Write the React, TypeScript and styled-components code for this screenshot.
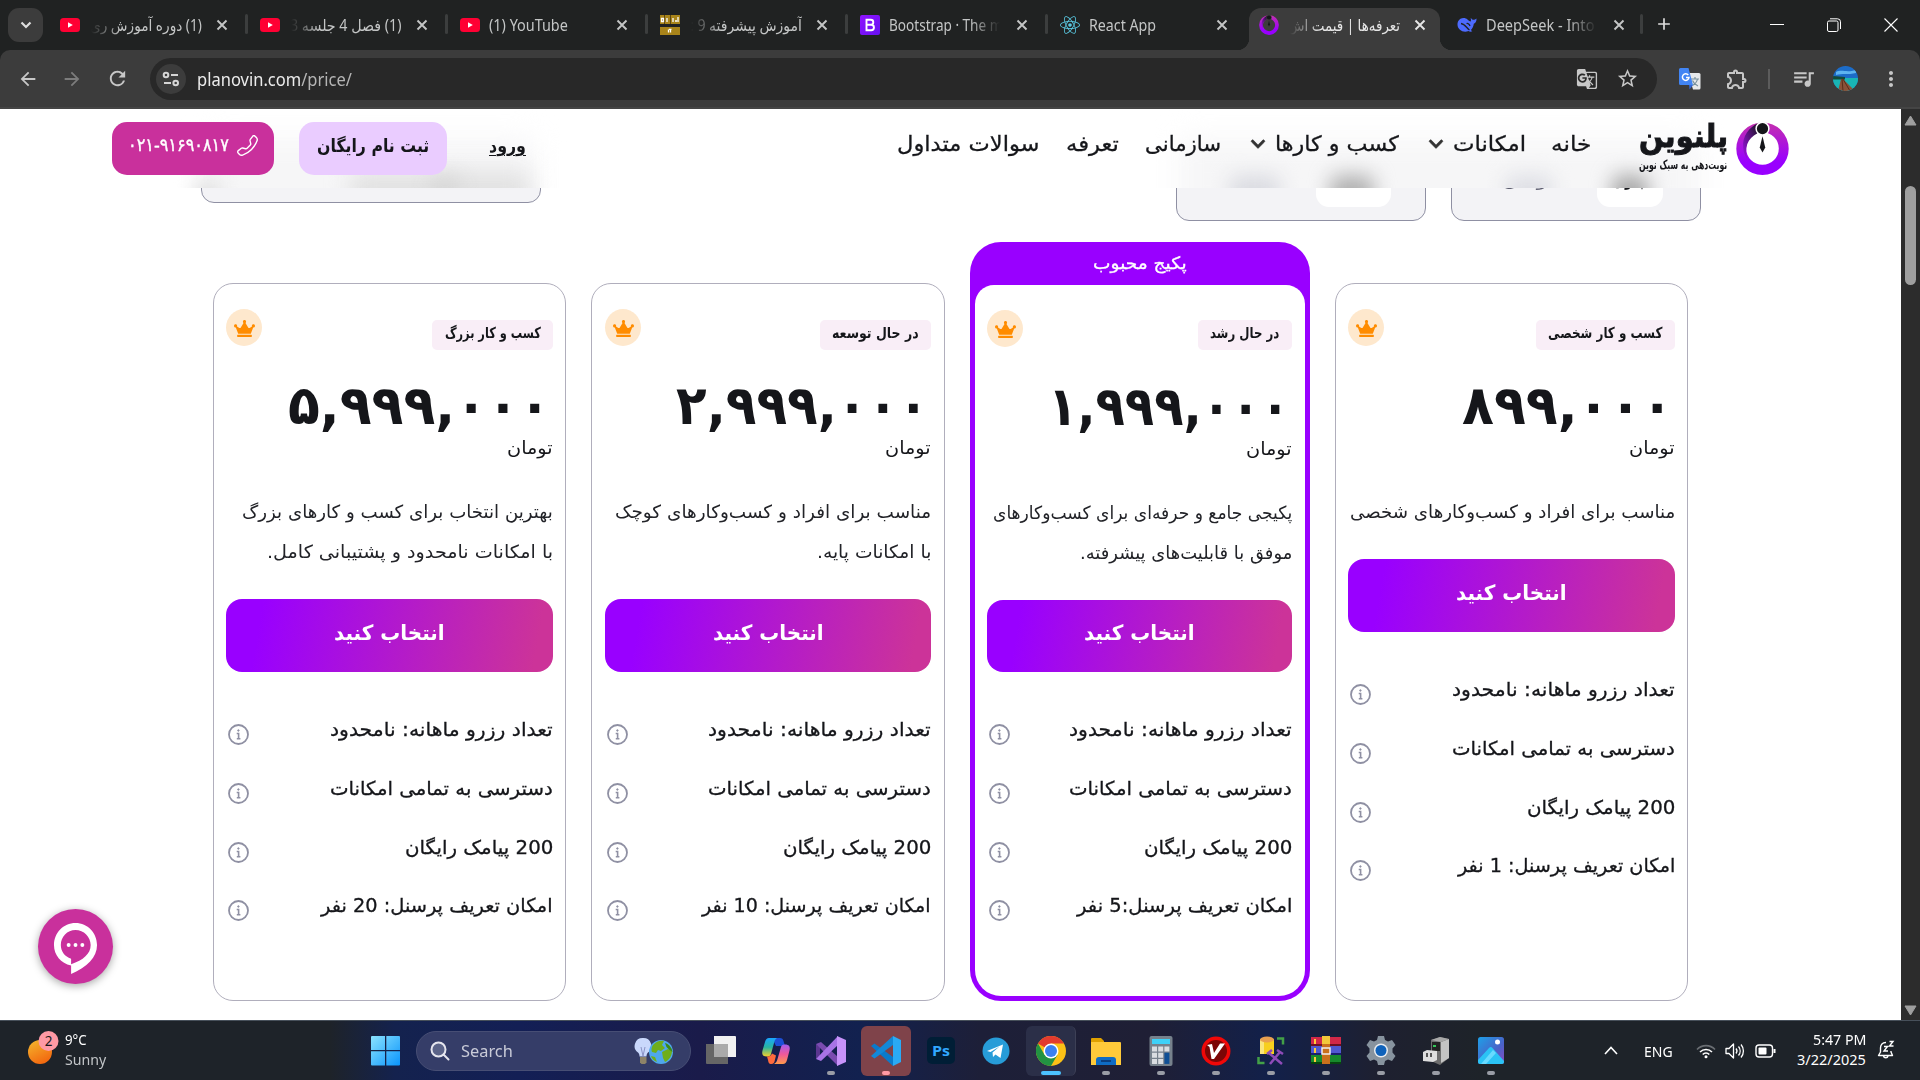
import React, { useLayoutEffect, useRef, useState } from "react";
import styled, { createGlobalStyle, css } from "styled-components";
import { FaCrown, FaChevronDown, FaReact } from "react-icons/fa";
import {
  MdArrowBack,
  MdArrowForward,
  MdRefresh,
  MdStarBorder,
  MdOutlineExtension,
  MdQueueMusic,
  MdMoreVert,
  MdGTranslate,
  MdAdd,
} from "react-icons/md";
import { BsTelephone } from "react-icons/bs";

const uiFont = `"Noto Sans", "Open Sans", "DejaVu Sans", sans-serif`;
const faFont = `"DejaVu Sans", "Noto Sans", sans-serif`;

const Global = createGlobalStyle`
  * { box-sizing: border-box; }
  body { margin: 0; background: #fff; overflow: hidden; }
  svg { display: block; flex: none; }
`;

/* ---------- width-fitted text ---------- */

const FitBox = styled.span<{ $rtl: boolean }>`
  display: inline-block;
  flex: none;
  white-space: nowrap;
  direction: ${(p) => (p.$rtl ? "rtl" : "ltr")};
  text-align: start;
`;
const FitInner = styled.span<{ $rtl: boolean }>`
  display: inline-block;
  transform-origin: ${(p) => (p.$rtl ? "right" : "left")} center;
`;

function Fit({ w, rtl = true, children }: { w: number; rtl?: boolean; children: React.ReactNode }) {
  const ref = useRef<HTMLSpanElement>(null);
  const [scale, setScale] = useState(1);
  useLayoutEffect(() => {
    if (ref.current) setScale(w / ref.current.offsetWidth);
  }, [w, children]);
  return (
    <FitBox $rtl={rtl} style={{ width: w }}>
      <FitInner $rtl={rtl} ref={ref} style={{ transform: `scaleX(${scale})` }}>
        {children}
      </FitInner>
    </FitBox>
  );
}

/* ---------- browser chrome ---------- */

const Screen = styled.div`
  width: 1920px;
  height: 1080px;
  display: flex;
  flex-direction: column;
  overflow: hidden;
  font-family: ${uiFont};
`;
const TabStrip = styled.div`
  height: 50px;
  flex: none;
  background: #202222;
  display: flex;
  align-items: flex-end;
  padding-left: 8px;
`;
const TabSearch = styled.div`
  width: 35px;
  height: 34px;
  margin-bottom: 8px;
  margin-right: 7px;
  border-radius: 11px;
  background: #3c3c3c;
  display: flex;
  align-items: center;
  justify-content: center;
  color: #dedede;
`;
const Tab = styled.div<{ $active?: boolean; $w?: number; $line?: boolean; $pad?: number }>`
  position: relative;
  width: ${(p) => p.$w ?? 200}px;
  height: 42px;
  flex: none;
  display: flex;
  align-items: center;
  padding: 0 0 8px ${(p) => p.$pad ?? 10}px;
  color: ${(p) => (p.$active ? "#e6e6e6" : "#c4c6c6")};
  font-size: 15.5px;
  ${(p) =>
    p.$active &&
    css`
      background: #3c3c3c;
      border-radius: 12px 12px 0 0;
      &::before,
      &::after {
        content: "";
        position: absolute;
        bottom: 0;
        width: 12px;
        height: 12px;
      }
      &::before {
        left: -12px;
        background: radial-gradient(circle at 0 0, transparent 12px, #3c3c3c 12.5px);
      }
      &::after {
        right: -12px;
        background: radial-gradient(circle at 100% 0, transparent 12px, #3c3c3c 12.5px);
      }
    `}
  ${(p) =>
    p.$line &&
    css`
      &::after {
        content: "";
        position: absolute;
        right: 2px;
        top: 6px;
        width: 3px;
        height: 20px;
        border-radius: 2px;
        background: #3c3e3e;
      }
    `}
`;
const TabTitle = styled.div<{ $rtl?: boolean; $fade?: boolean; $w?: number }>`
  width: ${(p) => p.$w ?? 113}px;
  height: 26px;
  line-height: 26px;
  margin-left: 9px;
  margin-right: 12px;
  overflow: hidden;
  display: flex;
  direction: ${(p) => (p.$rtl ? "rtl" : "ltr")};
  ${(p) =>
    p.$fade &&
    css`
      mask-image: linear-gradient(to ${p.$rtl ? "right" : "left"}, transparent 2px, #000 32px);
    `}
`;
const NewTab = styled.div`
  width: 36px;
  height: 42px;
  padding: 6px 0 0 9px;
  color: #dedede;
`;
const WindowButtons = styled.div`
  margin-left: auto;
  height: 50px;
  display: flex;
  align-items: center;
  padding-right: 22px;
  gap: 43px;
`;
const Toolbar = styled.div`
  height: 59px;
  flex: none;
  background: #3c3c3c;
  border-bottom: 2px solid #454545;
  border-radius: 10px 10px 0 0;
  display: flex;
  align-items: center;
  padding-left: 17px;
  color: #c7c7c7;
`;
const ToolbarBack = styled.div`
  background: #202222;
`;
const NavIcon = styled.div<{ $dim?: boolean; $gap: number }>`
  margin-right: ${(p) => p.$gap}px;
  color: ${(p) => (p.$dim ? "#7c7c7c" : "#c7c7c7")};
`;
const Omnibox = styled.div`
  width: 1507px;
  height: 42px;
  border-radius: 21px;
  background: #282828;
  display: flex;
  align-items: center;
  padding: 0 18px 0 6px;
  gap: 18px;
`;
const SiteInfo = styled.div`
  width: 30px;
  height: 30px;
  border-radius: 50%;
  background: #3c3c3c;
  display: flex;
  align-items: center;
  justify-content: center;
  margin-right: -7px;
`;
const Url = styled.div`
  flex: 1;
  font-size: 18px;
  line-height: 26px;
  color: #ececec;
  i {
    font-style: normal;
    color: #b5b5b5;
  }
`;
const ToolRight = styled.div`
  display: flex;
  align-items: center;
  margin-left: 22px;
`;
const ExtensionSlot = styled.div`
  margin-left: 24px;
`;
const AvatarSlot = styled.div`
  margin: 0 21px 0 17px;
`;
const ToolSep = styled.div`
  width: 2px;
  height: 20px;
  background: #5c5c5c;
  margin: 0 21px 0 19px;
`;

/* ---------- page ---------- */

const Viewport = styled.div`
  height: 911px;
  flex: none;
  display: flex;
`;
const Page = styled.main`
  position: relative;
  width: 1901px;
  background: #fff;
  font-family: ${faFont};
  color: #15161a;
  overflow: hidden;
`;
const Scrollbar = styled.div`
  width: 19px;
  background: #2c2c2c;
  display: flex;
  flex-direction: column;
  align-items: center;
  padding: 6px 0 4px;
`;
const Thumb = styled.div`
  width: 11px;
  height: 99px;
  margin: 60px 0 auto;
  border-radius: 6px;
  background: #9f9f9f;
`;
const Header = styled.header`
  position: absolute;
  z-index: 2;
  top: 0;
  left: 0;
  width: 1901px;
  height: 79px;
  overflow: hidden;
  background: #fff;
  display: flex;
  align-items: flex-start;
  padding: 13px 0 0 112px;
  > * {
    position: relative;
  }
`;
const Haze = styled.span<{ $x: number; $y: number; $w: number; $c: string; $b: number }>`
  && {
    position: absolute;
  }
  left: ${(p) => p.$x}px;
  top: ${(p) => p.$y}px;
  width: ${(p) => p.$w}px;
  height: ${(p) => 110 - p.$y}px;
  border-radius: 8px;
  background: ${(p) => p.$c};
  filter: blur(${(p) => p.$b}px);
`;
const PhoneButton = styled.div`
  width: 162px;
  height: 53px;
  border-radius: 15px;
  background: #c9309c;
  color: #fff;
  display: flex;
  align-items: flex-start;
  padding: 11px 0 0 16px;
  gap: 8px;
  font-size: 18px;
  line-height: 24px;
  -webkit-text-stroke: 0.4px currentColor;
  svg {
    transform: scaleX(-1);
    margin-top: 2px;
  }
`;
const SignUp = styled.div`
  width: 148px;
  height: 53px;
  margin-left: 25px;
  border-radius: 15px;
  background: #eaccff;
  display: flex;
  justify-content: center;
  font-size: 18px;
  font-weight: 700;
  line-height: 48px;
`;
const Login = styled.div`
  margin-left: 42px;
  font-size: 18px;
  font-weight: 700;
  line-height: 48px;
  u {
    text-decoration-thickness: 1px;
    text-underline-offset: 3px;
  }
`;
const Nav = styled.nav`
  display: flex;
  align-items: center;
  height: 44px;
  margin-left: 371px;
  font-size: 21px;
  line-height: 44px;
  -webkit-text-stroke: 0.3px currentColor;
`;
const NavItem = styled.div<{ $gap?: number }>`
  display: flex;
  align-items: center;
  gap: 9px;
  margin-right: ${(p) => p.$gap ?? 25}px;
  svg {
    color: #333;
    stroke: #333;
    stroke-width: 20px;
  }
`;
const Brand = styled.div`
  display: flex;
  margin-left: 48px;
  gap: 8px;
`;
const BrandText = styled.div`
  width: 89px;
  display: flex;
  flex-direction: column;
  font-weight: 700;
`;
const BrandName = styled.div`
  height: 34px;
  font-size: 31px;
  line-height: 28px;
  -webkit-text-stroke: 1px currentColor;
`;
const BrandTag = styled.div`
  height: 18px;
  font-size: 12.5px;
  line-height: 18px;
`;

const Panels = styled.div`
  display: flex;
  align-items: flex-start;
  padding: 18px 0 0 201px;
  height: 133px;
`;
const Panel = styled.div<{ $w: number; $h: number; $ml?: number }>`
  width: ${(p) => p.$w}px;
  height: ${(p) => p.$h}px;
  margin-left: ${(p) => p.$ml ?? 0}px;
  border: 1px solid #8f90a3;
  border-radius: 13px;
  background: #f3f3f6;
  display: flex;
  align-items: flex-end;
`;
const Pill = styled.div<{ $w: number; $ml: number }>`
  width: ${(p) => p.$w}px;
  height: 58px;
  margin: 0 0 13px ${(p) => p.$ml}px;
  border-radius: 13px;
  background: #fff;
  display: flex;
  justify-content: center;
  font-weight: 700;
  font-size: 17px;
  line-height: 63px;
`;
const PanelText = styled.div`
  height: 58px;
  margin: 0 0 13px 50px;
  line-height: 63px;
  font-size: 17px;
  color: #5d5e70;
`;

const Cards = styled.section`
  display: flex;
  align-items: flex-end;
  height: 759px;
  padding-left: 213px;
  gap: 25px;
`;
const cardBody = css`
  direction: rtl;
  display: flex;
  flex-direction: column;
  background: #fff;
`;
const Card = styled.article<{ $w: number; $pad: number }>`
  ${cardBody}
  width: ${(p) => p.$w}px;
  height: 718px;
  border: 1px solid #b0aebc;
  border-radius: 20px;
  padding: 25px ${(p) => p.$pad}px 0;
`;
const Popular = styled.article`
  width: 340px;
  height: 759px;
  border-radius: 31px;
  background: #9900ff;
  padding: 0 5px 5px;
  display: flex;
  flex-direction: column;
`;
const PopularLabel = styled.div`
  height: 43px;
  display: flex;
  justify-content: center;
  color: #fff;
  font-size: 17px;
  line-height: 43px;
  -webkit-text-stroke: 0.3px currentColor;
`;
const PopularBody = styled.div`
  ${cardBody}
  flex: 1;
  border-radius: 19px 19px 26px 26px;
  padding: 25px 13px 0 12px;
`;
const TopRow = styled.div<{ $shift: number }>`
  display: flex;
  justify-content: space-between;
  align-items: flex-start;
  height: 41px;
  > :first-child {
    margin-top: ${(p) => p.$shift}px;
  }
`;
const Badge = styled.div<{ $w: number }>`
  width: ${(p) => p.$w}px;
  height: 30px;
  border-radius: 5px;
  background: #f9eef7;
  display: flex;
  justify-content: center;
  font-size: 15px;
  font-weight: 700;
  line-height: 27px;
`;
const Crown = styled.div`
  width: 36px;
  height: 37px;
  border-radius: 50%;
  background: #fee8cd;
  color: #ff8c00;
  display: flex;
  align-items: center;
  justify-content: center;
  padding-top: 1px;
`;
const Price = styled.div`
  height: 60px;
  margin-top: 26px;
  padding-right: 2px;
  font-size: 54px;
  font-weight: 700;
  line-height: 60px;
`;
const Unit = styled.div`
  height: 24px;
  font-size: 18px;
  line-height: 24px;
`;
const Desc = styled.div`
  margin-top: 32px;
  font-size: 18px;
  line-height: 40px;
  display: flex;
  flex-direction: column;
  color: #222328;
`;
const Choose = styled.button<{ $h: number }>`
  flex: none;
  height: ${(p) => p.$h}px;
  margin-top: 27px;
  border: 0;
  border-radius: 16px;
  padding: 0 0 6px;
  background: linear-gradient(100deg, #9900ff 11%, #cc3399 94%);
  color: #fff;
  font-family: ${faFont};
  font-size: 21px;
  font-weight: 700;
`;
const Features = styled.ul`
  list-style: none;
  margin: 29px 0 0;
  padding: 0;
  font-size: 19px;
  -webkit-text-stroke: 0.3px currentColor;
`;
const Feature = styled.li`
  display: flex;
  justify-content: space-between;
  height: 58.75px;
  line-height: 57px;
  svg {
    margin: 23px 0 0 2px;
  }
`;
const Chat = styled.div`
  position: absolute;
  left: 38px;
  top: 800px;
  width: 75px;
  height: 75px;
  border-radius: 50%;
  background: #c9309c;
  box-shadow: 0 2px 8px rgba(0, 0, 0, 0.35);
  display: flex;
  align-items: center;
  justify-content: center;
  padding-top: 3px;
`;

/* ---------- taskbar ---------- */

const Taskbar = styled.footer`
  height: 60px;
  flex: none;
  display: flex;
  align-items: center;
  border-top: 1px solid #47505a;
  background: linear-gradient(
    90deg,
    #1e2329 0,
    #1e2329 330px,
    #14224e 395px,
    #131f55 520px,
    #1a1b4a 700px,
    #12214f 860px,
    #1d1f38 980px,
    #1f1f35 1150px,
    #12204a 1270px,
    #1e2030 1380px,
    #1e2329 1480px
  );
  color: #fff;
`;
const Weather = styled.div`
  width: 371px;
  padding: 0 0 4px 26px;
  display: flex;
  align-items: center;
  gap: 6px;
  font-size: 14.5px;
  line-height: 20px;
`;
const WeatherText = styled.div`
  display: flex;
  flex-direction: column;
  > :last-child {
    color: #c2c5c8;
  }
`;
const SearchBox = styled.div`
  width: 275px;
  height: 40px;
  margin-left: 15px;
  border-radius: 20px;
  background: #353d68;
  border: 1px solid #474e74;
  display: flex;
  align-items: center;
  padding: 0 16px 0 13px;
  font-size: 17px;
  color: #c9cbd8;
  > svg:last-child {
    margin-left: auto;
  }
`;
const SearchLabel = styled.div`
  margin-left: 11px;
`;
const Apps = styled.div`
  display: flex;
  margin-left: 3px;
`;
const AppSlot = styled.div`
  width: 55px;
  height: 50px;
  padding: 0 2px;
`;
const AppButton = styled.div<{ $bg?: string; $run?: string; $wide?: boolean }>`
  width: 50px;
  height: 50px;
  border-radius: 6px;
  background: ${(p) => p.$bg ?? "transparent"};
  display: flex;
  flex-direction: column;
  align-items: center;
  padding-top: 10px;
  ${(p) =>
    p.$wide &&
    css`
      border-right: 1px solid #3d4056;
    `}
  &::after {
    content: "";
    margin-top: 5px;
    width: ${(p) => (p.$wide ? 20 : 8)}px;
    height: 4px;
    border-radius: 2px;
    background: ${(p) => p.$run ?? "transparent"};
  }
`;
const Tray = styled.div`
  margin-left: auto;
  display: flex;
  align-items: center;
  font-size: 14.5px;
`;
const TrayGroup = styled.div`
  display: flex;
  align-items: center;
  gap: 9px;
  margin: 0 21px 0 23px;
`;
const Lang = styled.div`
  margin-left: 26px;
`;
const Clock = styled.div`
  width: 69px;
  display: flex;
  flex-direction: column;
  align-items: flex-end;
  line-height: 20px;
  padding-bottom: 4px;
`;
const Bell = styled.div`
  margin: 0 25px 2px 11px;
`;

/* ---------- drawings ---------- */

const CloseMark = () => (
  <svg width="16" height="16" viewBox="0 0 16 16" fill="none" stroke="currentColor" strokeWidth="1.900">
    <path d="M3.500 3.500l9 9M12.500 3.500l-9 9" />
  </svg>
);
const YouTube = () => (
  <svg width="20" height="20" viewBox="0 0 20 20">
    <rect y="3" width="20" height="14" rx="3.5" fill="#ff0033" />
    <path d="M8 7.2v5.6l4.8-2.8z" fill="#fff" />
  </svg>
);
const BookIcon = () => (
  <svg width="20" height="20" viewBox="0 0 20 20">
    <path fill="#a8841a" d="M0 0h20v9H0zM0 12h20v8H0z" />
    <path fill="#5c4510" d="M4 0h1v9H4zM10 0h1v9h-1z" />
    <path stroke="#fff" strokeWidth="1.300" d="M1.500 3.500h2v3h-2zM7 3v4M13 3v4M15 6h2M18 2v5M8.500 14.500v3M10.500 14.500v3M9 14.300h2.500" fill="none" />
  </svg>
);
const BootstrapIcon = () => (
  <svg width="20" height="20" viewBox="0 0 20 20">
    <defs>
      <linearGradient id="bs" x1="0" y1="0" x2="1" y2="1">
        <stop stopColor="#9013fe" />
        <stop offset="1" stopColor="#6610f2" />
      </linearGradient>
    </defs>
    <rect width="20" height="20" rx="2" fill="url(#bs)" />
    <path d="M6.500 4.700h4.300a2.500 2.500 0 0 1 0 5H6.500zM6.500 9.700h4.700a2.700 2.700 0 0 1 0 5.500H6.500z" fill="none" stroke="#fff" strokeWidth="1.900" />
  </svg>
);
const RingMark = ({ size, dark }: { size: number; dark?: boolean }) => (
  <svg width={size} height={size} viewBox="0 0 52 52">
    <defs>
      <linearGradient id={`rg${size}`} x1="0" y1="0" x2="0" y2="1">
        <stop stopColor="#c42fae" />
        <stop offset=".75" stopColor="#9900ff" />
      </linearGradient>
      <linearGradient id={`rd${size}`} x1="1" y1="0" x2="0" y2="1">
        <stop stopColor="#15161a" />
        <stop offset="1" stopColor="#a010e8" />
      </linearGradient>
    </defs>
    <path fill={`url(#rg${size})`} fillRule="evenodd" d="M26 .5a25.700 25.700 0 1 0 0 51.400 25.700 25.700 0 0 0 0-51.400zM26 10a16 16 0 1 1 0 32 16 16 0 0 1 0-32z" />
    <path fill={`url(#rd${size})`} d="M22 1C13 5 6 14 7 25c.3 5 1.700 8 4 11-3-10 0-20 10-25z" />
    <circle cx="26" cy="6.500" r="7" fill={dark ? "#3c3c3c" : "#fff"} />
    <circle cx="26" cy="6.500" r="5.500" fill="#15161a" />
    <path d="M26 14l2.700 11-2.700 5-2.700-5z" fill="#15161a" />
  </svg>
);
const Whale = () => (
  <svg width="20" height="20" viewBox="0 0 20 20">
    <path fill="#4d6bfe" d="M1 6.500C3 2.500 8 2 10.500 4.500c1 1 2 1.800 3.200 2 .5-1.500.3-2.500-.2-3.300 1 .2 1.700.8 2 1.600C17 5 18.500 4.500 19.500 3.500c.2 2.500-.8 4.600-2.700 5.200-.3 3-1.600 5.200-3 6.300l1.500 1.300c-1.500.6-2.800.4-3.800-.2C6 18 1 15 .5 10c-.1-1.300 0-2.500.5-3.500z" />
    <path d="M4 8.500c4 .5 6 5 8.500 6.500M9.500 8.500c1.500-.5 3 .8 3.500 2.500" stroke="#202222" strokeWidth="1.300" fill="none" />
  </svg>
);
const TuneIcon = () => (
  <svg width="18" height="16" viewBox="0 0 18 16" fill="none" stroke="#d5d5d5" strokeWidth="2">
    <circle cx="4" cy="4" r="2.300" />
    <path d="M9 4h7M2 12h7" />
    <circle cx="13.700" cy="12" r="2.300" />
  </svg>
);
const ColorTranslate = () => (
  <svg width="22" height="22" viewBox="0 0 22 22">
    <path fill="#e6e8ea" d="M9 5h11a1.500 1.500 0 0 1 1.500 1.500V20a1.500 1.500 0 0 1-1.500 1.500h-6z" />
    <path d="M12 11h8M16 9v2M18.500 11c-.6 3-2.500 5-5 6.500M13.500 12.500c.8 2 3 4.500 5.500 5.500" stroke="#78909c" strokeWidth="1.200" fill="none" />
    <path fill="#4285f4" d="M1.500 0h8l4.500 17H1.500A1.500 1.500 0 0 1 0 15.500v-14A1.500 1.500 0 0 1 1.500 0z" />
    <path fill="#3367d6" d="M10 17h4l-3.500 4.500z" />
    <path d="M9.300 7A3.300 3.300 0 1 0 10 9.500H7" stroke="#fff" strokeWidth="1.500" fill="none" />
  </svg>
);
const Avatar = () => (
  <svg width="25" height="25" viewBox="0 0 25 25">
    <clipPath id="av"><circle cx="12.500" cy="12.500" r="12.500" /></clipPath>
    <g clipPath="url(#av)">
      <path fill="#1c6cc8" d="M0 0h25v25H0z" />
      <path fill="#5db4f0" d="M3 6c6-3 10 1 20-2v3c-8 2-14 0-20 2z" />
      <path fill="#19b5b5" d="M0 12h25v13H0z" />
      <path fill="#134a3a" d="M0 10l12 1v2.500H0z" />
      <path fill="#8a5238" d="M8 13h2l12 12H5z" />
      <path d="M9 13l1 12M10 13l7 12" stroke="#5a2e1a" />
    </g>
  </svg>
);
const InfoIcon = () => (
  <svg width="21" height="21" viewBox="0 0 21 21" fill="none" stroke="#8f90a3">
    <circle cx="10.500" cy="10.500" r="9.500" strokeWidth="1.800" />
    <path d="M8.700 9.500h1.900v5M8.800 14.700h3.600" strokeWidth="1.600" />
    <circle cx="10.400" cy="6.500" r=".8" fill="#8f90a3" strokeWidth=".8" />
  </svg>
);
const ChatIcon = () => (
  <svg width="45" height="53" viewBox="0 0 46 54">
    <path fill="#fff" fillRule="evenodd" d="M23 1C10.500 1 1 11 1 23.500 1 34 8 42 18.500 44.500V53C35 46 45 36 45 23.500 45 11 35.500 1 23 1zm0 7c8.500 0 15.500 7 15.500 15.500 0 9-7.500 15.500-20 19.500v-5.500C12 35.500 8 30 8 23.500 8 15 14.500 8 23 8z" />
    <circle cx="16" cy="23.500" r="2" fill="#fff" />
    <circle cx="23" cy="23.500" r="2" fill="#fff" />
    <circle cx="30" cy="23.500" r="2" fill="#fff" />
  </svg>
);
const Sun = () => (
  <svg width="33" height="36" viewBox="0 0 33 36">
    <defs>
      <linearGradient id="sun" x1="0" y1="0" x2=".5" y2="1">
        <stop stopColor="#f5b92e" />
        <stop offset="1" stopColor="#f26a10" />
      </linearGradient>
    </defs>
    <circle cx="14" cy="21" r="12" fill="url(#sun)" />
    <circle cx="22.500" cy="10" r="10" fill="#ff99a4" />
    <text x="22.500" y="15" fontSize="13.500" textAnchor="middle" fill="#1a1a1a" fontFamily="Noto Sans, sans-serif">2</text>
  </svg>
);
const Start = () => (
  <svg width="30" height="30" viewBox="0 0 30 30">
    <defs>
      <linearGradient id="win" x1="0" y1="0" x2="1" y2="1">
        <stop stopColor="#8be3ff" />
        <stop offset="1" stopColor="#0a94fb" />
      </linearGradient>
    </defs>
    <path fill="url(#win)" d="M1 0h13v14H0V1a1 1 0 0 1 1-1zM15.300 0H28a1 1 0 0 1 1 1v13H15.300zM0 15.300h14V29.500H1a1 1 0 0 1-1-1zM15.300 15.300H29V28.500a1 1 0 0 1-1 1H15.300z" />
  </svg>
);
const Magnifier = () => (
  <svg width="20" height="20" viewBox="0 0 20 20" fill="none" stroke="#e6e6ee" strokeWidth="2">
    <circle cx="8.500" cy="8.500" r="7" fill="#5b6388" />
    <path d="M13.500 13.500l5 5" strokeLinecap="round" />
  </svg>
);
const BulbGlobe = () => (
  <svg width="40" height="28" viewBox="0 0 40 28">
    <path d="M9 1a8 8 0 0 0-5 14.500c1 1 1.500 2 1.500 4h7c0-2 .5-3 1.500-4A8 8 0 0 0 9 1z" fill="#c9d8fb" />
    <path d="M7 10l2 9 2-9" stroke="#8b93c5" fill="none" />
    <path d="M6 20h6.500v5.500L11 27H7.500L6 25.500z" fill="#8e8468" />
    <circle cx="27" cy="15" r="12" fill="#4fa8ec" />
    <path fill="#6fae1c" d="M19 8c3-4 8-5 11-4l-2 4 3 3-4 3-3-1-2 3-4-1c-1-2-.5-5 1-7zM28 15l6-3 4 2c0 5-3 9-7 11l-2-4zM17 19l4 1 2 5c-3-1-5-3-6-6z" />
    <path fill="#3d8a14" d="M31 6c4 1 7 5 7.500 9l-3-2-3-3z" />
  </svg>
);

const TaskView = () => (
  <svg width="30" height="30" viewBox="0 0 30 30">
    <path fill="#666" d="M0 8h22v20H1a1 1 0 0 1-1-1z" />
    <path fill="#f1f1f1" d="M8 0h21a1 1 0 0 1 1 1v20H8z" />
    <path fill="#aaa" d="M8 8h14v13H8z" />
  </svg>
);
const Copilot = () => (
  <svg width="30" height="30" viewBox="0 0 30 30">
    <defs>
      <linearGradient id="c1" x1="0" y1="0" x2="0" y2="1">
        <stop stopColor="#1aa5ff" />
        <stop offset=".5" stopColor="#28b5a0" />
        <stop offset="1" stopColor="#f5d02a" />
      </linearGradient>
      <linearGradient id="c2" x1="0" y1="0" x2="0" y2="1">
        <stop stopColor="#a35cf0" />
        <stop offset=".5" stopColor="#f0589a" />
        <stop offset="1" stopColor="#ff9a4a" />
      </linearGradient>
    </defs>
    <path fill="#1c4fd6" d="M11 2h8c2 0 3 1 3.500 3L24 10h-9z" />
    <path fill="url(#c1)" d="M8 2h8c-2 1-2.500 3-3 5l-3 11c-.5 2-2 2.500-4 2.500-4 0-5.500-2-4.500-6L4 6c.7-2.500 2-4 4-4z" />
    <path fill="url(#c2)" d="M22 28h-9c2-1 3-3 3.500-5L20 11c.5-2 2-2.500 4-2.500 4 0 5.500 2 4.500 6L26 24c-.7 2.500-2 4-4 4z" />
    <path fill="#ff6a3d" d="M6 20.500c2 0 4-.5 5-3l4 2-1.500 6c-.5 1.500-1 2.500-3 2.500-3 0-3-2-3.500-4z" />
  </svg>
);
const VisualStudio = () => (
  <svg width="30" height="30" viewBox="0 0 30 30">
    <path fill="#5b3690" d="M0 8l4 3v9l-4 3z" />
    <path fill="#7a4bb0" d="M0 8l5-2 17 15v9z" />
    <path fill="#a873e6" d="M0 23l5 2L22 9V0z" />
    <path fill="#c793fa" d="M21 0l9 4v22l-9 4z" />
  </svg>
);
const VSCode = () => (
  <svg width="30" height="30" viewBox="0 0 30 30">
    <path fill="#0a7acb" d="M0 10l3.500-2.500L22 21v9z" />
    <path fill="#1288d8" d="M0 20l3.500 2.500L22 9V0z" />
    <path fill="#2aaaf5" d="M22 0l8 4v22l-8 4z" />
  </svg>
);
const Photoshop = () => (
  <svg width="30" height="30" viewBox="0 0 30 30">
    <rect x="1" y="1" width="28" height="27" rx="5" fill="#001e36" />
    <text x="15" y="19.500" textAnchor="middle" fontSize="14.500" fontWeight="700" fill="#31a8ff" fontFamily="Open Sans, sans-serif" textLength="18" lengthAdjust="spacingAndGlyphs">Ps</text>
  </svg>
);
const Telegram = () => (
  <svg width="30" height="30" viewBox="0 0 30 30">
    <circle cx="15" cy="15" r="13.500" fill="#279cd8" />
    <path fill="#fff" d="M6 15l16-6.500-2.500 13.500-5-3.500-2.500 2.500-.5-4.500 7-6-9 5.500z" />
  </svg>
);
const Chrome = () => (
  <svg width="30" height="30" viewBox="0 0 30 30">
    <circle cx="15" cy="15" r="15" fill="#fbc116" />
    <path fill="#e33b2e" d="M15 15L2 7.500A15 15 0 0 1 28 7.500H15z" />
    <path fill="#229342" d="M2 7.500A15 15 0 0 0 15 30l6.500-11.200L8.500 18.800z" />
    <circle cx="15" cy="15" r="7.500" fill="#fff" />
    <circle cx="15" cy="15" r="6" fill="#3b80f0" />
  </svg>
);
const Folder = () => (
  <svg width="30" height="30" viewBox="0 0 30 30">
    <path fill="#e0a100" d="M0 3a1 1 0 0 1 1-1h9l3 3v6H0z" />
    <path fill="#ffca3a" d="M0 6h29a1 1 0 0 1 1 1v22H0z" />
    <path fill="#0f6cc4" d="M5 29v-5a3 3 0 0 1 3-3h14a3 3 0 0 1 3 3v5z" />
    <path stroke="#0a3f80" strokeWidth="2" d="M10 25h10" />
  </svg>
);
const Calculator = () => (
  <svg width="30" height="30" viewBox="0 0 30 30">
    <rect x="3.500" width="23" height="30" rx="2" fill="#76818c" />
    <path fill="#3ed1f8" d="M6 3h18v5H6z" />
    <path fill="#d9dde1" d="M6 10.500h5v5H6zm6.200 0h5v5h-5zM18.400 10.500h5v5h-5zM6 16.700h5v5H6zm6.200 0h5v5h-5zM6 22.900h5v5H6zm6.200 0h5v5h-5z" />
    <path fill="#0f4f95" d="M18.400 16.700h5v11.200h-5z" />
  </svg>
);
const VIcon = () => (
  <svg width="30" height="30" viewBox="0 0 30 30">
    <circle cx="15" cy="15" r="14.500" fill="#f00808" />
    <circle cx="15" cy="15" r="11" fill="#7c0606" />
    <path fill="#fff" d="M6 9l5-1 2 9 6-9.500h5L13 23h-2.500L8.500 11z" />
  </svg>
);
const SqlTools = () => (
  <svg width="30" height="30" viewBox="0 0 30 30">
    <path fill="#f7cf1e" d="M4 3h14v15H4z" />
    <path fill="#fae57c" d="M4 3h4v15H4z" />
    <ellipse cx="11" cy="3.500" rx="7" ry="3" fill="#e8a050" />
    <path fill="none" stroke="#43a047" strokeWidth="2.500" d="M21 2.500h6v6M2.500 21v6h6" />
    <path stroke="#8e4bb8" strokeWidth="2.500" d="M14 28l10-12M13 17l13 11M11 18l5-4M21 14l6 4" />
  </svg>
);
const WinRar = () => (
  <svg width="30" height="30" viewBox="0 0 30 30">
    <path fill="#d22848" d="M0 1h30v9H0z" />
    <path fill="#5058d0" d="M0 10h30v9H0z" />
    <path fill="#178a2c" d="M0 19h30v9H0z" />
    <path fill="#701020" d="M0 8h30v2H0z" />
    <path fill="#1a1f70" d="M0 17h30v2H0z" />
    <path fill="#07460f" d="M0 26h30v2H0z" />
    <path fill="#ffca3a" d="M3 3h2v5H3zm0 9h2v5H3zm0 9h2v5H3z" />
    <path fill="#c9701c" d="M11 0h8v28h-8z" />
    <path fill="#f2c83a" d="M11 0h8v8h-8z" />
    <path fill="none" stroke="#eee" strokeWidth="1.500" d="M11 12h8v6h-8z" />
  </svg>
);
const Gear = () => (
  <svg width="30" height="30" viewBox="0 0 30 30">
    <path fill="#87939e" d="M12 0h6l1 4 3 1.500 4-1.500 3.500 5-3 3.500v4l3 3.500-3.500 5-4-1.500L19 25l-1 4h-6l-1-4-3-1.500L4 25 .5 20l3-3.500v-4L.5 9 4 4l4 1.500L11 4z" />
    <circle cx="15" cy="14.500" r="7" fill="#e8ecf0" />
    <circle cx="15" cy="14.500" r="5.500" fill="#0f62ba" />
  </svg>
);
const Device = () => (
  <svg width="30" height="30" viewBox="0 0 30 30">
    <path fill="#6d6d6d" d="M10 4l9-3 9 2v19l-9 7-9-4z" />
    <path fill="#c4c4c4" d="M20 6l8-3v19l-8 5z" />
    <path fill="#a8a8a8" d="M10 4l9-3 9 2-8 3z" />
    <path fill="#222" d="M11 6h8v9h-8z" />
    <path fill="#34c759" d="M12 9h3v2h-3z" />
    <path fill="#dedede" d="M2 16l4-2 10 1v9l-4 2-10-1z" />
    <path fill="#555" d="M5 17h2v4H5zm4 0h2v4H9z" />
  </svg>
);
const Photos = () => (
  <svg width="30" height="30" viewBox="0 0 30 30">
    <defs>
      <linearGradient id="ph" x1="0" y1="0" x2="1" y2="1">
        <stop stopColor="#1da0e8" />
        <stop offset=".6" stopColor="#4a62c8" />
        <stop offset="1" stopColor="#884bc0" />
      </linearGradient>
    </defs>
    <rect x="2" y="1" width="26" height="27" rx="2.500" fill="url(#ph)" />
    <path fill="#2bc3f5" d="M2 24l11-12c1.200-1.200 2.400-1.200 3.500 0L28 25v1a2 2 0 0 1-2 2H4a2 2 0 0 1-2-2z" />
    <path fill="#68daff" d="M5 28l12-14 3 3-10 11z" />
    <circle cx="21.500" cy="6" r="2.500" fill="#fff" />
  </svg>
);

/* ---------- data ---------- */

interface Plan {
  w: number;
  pad: number;
  name: string;
  nameW: number;
  badgeW: number;
  price: string;
  priceW: number;
  desc: [string, number][];
  last: string;
  lastW: number;
}

const plans: Plan[] = [
  {
    w: 353, pad: 12, name: "کسب و کار بزرگ", nameW: 96, badgeW: 121, price: "۵,۹۹۹,۰۰۰", priceW: 263,
    desc: [["بهترین انتخاب برای کسب و کارهای بزرگ", 311], ["با امکانات نامحدود و پشتیبانی کامل.", 286]],
    last: "امکان تعریف پرسنل: 20 نفر", lastW: 232,
  },
  {
    w: 354, pad: 13, name: "در حال توسعه", nameW: 87, badgeW: 111, price: "۲,۹۹۹,۰۰۰", priceW: 253,
    desc: [["مناسب برای افراد و کسب‌وکارهای کوچک", 316], ["با امکانات پایه.", 114]],
    last: "امکان تعریف پرسنل: 10 نفر", lastW: 229,
  },
  {
    w: 340, pad: 12, name: "در حال رشد", nameW: 69, badgeW: 94, price: "۱,۹۹۹,۰۰۰", priceW: 242,
    desc: [["پکیجی جامع و حرفه‌ای برای کسب‌وکارهای", 299], ["موفق با قابلیت‌های پیشرفته.", 212]],
    last: "امکان تعریف پرسنل:5 نفر", lastW: 215,
  },
  {
    w: 353, pad: 12, name: "کسب و کار شخصی", nameW: 114, badgeW: 139, price: "۸۹۹,۰۰۰", priceW: 211,
    desc: [["مناسب برای افراد و کسب‌وکارهای شخصی", 325]],
    last: "امکان تعریف پرسنل: 1 نفر", lastW: 217,
  },
];

function PlanContent({ plan, popular }: { plan: Plan; popular?: boolean }) {
  const features: [string, number][] = [
    ["تعداد رزرو ماهانه: نامحدود", 223],
    ["دسترسی به تمامی امکانات", 223],
    ["200 پیامک رایگان", 148],
    [plan.last, plan.lastW],
  ];
  return (
    <>
      <TopRow $shift={popular ? 10 : 11}>
        <Badge $w={plan.badgeW}><Fit w={plan.nameW}>{plan.name}</Fit></Badge>
        <Crown><FaCrown size={21} /></Crown>
      </TopRow>
      <Price><Fit w={plan.priceW}>{plan.price}</Fit></Price>
      <Unit><Fit w={46}>تومان</Fit></Unit>
      <Desc>
        {plan.desc.map(([t, w]) => <Fit key={t} w={w}>{t}</Fit>)}
      </Desc>
      <Choose $h={popular ? 72 : 73}><Fit w={111}>انتخاب کنید</Fit></Choose>
      <Features>
        {features.map(([t, w]) => (
          <Feature key={t}><Fit w={w}>{t}</Fit><InfoIcon /></Feature>
        ))}
      </Features>
    </>
  );
}

const tabs = [
  { icon: <YouTube />, title: "(1) دوره آموزش ری", w: 112, rtl: true, fade: true, line: true },
  { icon: <YouTube />, title: "(1) فصل 4 جلسه 3", w: 112, rtl: true, fade: true, line: true },
  { icon: <YouTube />, title: "(1) YouTube", w: 79, rtl: false, fade: false, line: true },
  { icon: <BookIcon />, title: "آموزش پیشرفته 9 :", w: 112, rtl: true, fade: true, line: true },
  { icon: <BootstrapIcon />, title: "Bootstrap · The m", w: 113, rtl: false, fade: true, line: true },
  { icon: <FaReact size={20} color="#58c4dc" />, title: "React App", w: 67, rtl: false, fade: false, line: false },
];

const running = "#9a9da6";
const apps: { icon: React.ReactNode; bg?: string; run?: string; wide?: boolean }[] = [
  { icon: <TaskView /> },
  { icon: <Copilot /> },
  { icon: <VisualStudio />, run: running },
  { icon: <VSCode />, bg: "#7f434a", run: "#ff99a4" },
  { icon: <Photoshop /> },
  { icon: <Telegram /> },
  { icon: <Chrome />, bg: "#2b2f48", run: "#4cc2ff", wide: true },
  { icon: <Folder />, run: running },
  { icon: <Calculator />, run: running },
  { icon: <VIcon />, run: running },
  { icon: <SqlTools />, run: running },
  { icon: <WinRar />, run: running },
  { icon: <Gear />, run: running },
  { icon: <Device />, run: running },
  { icon: <Photos />, run: running },
];

export default function App() {
  return (
    <Screen>
      <Global />
      <TabStrip>
        <TabSearch>
          <svg width="12" height="8" viewBox="0 0 12 8" fill="none" stroke="currentColor" strokeWidth="2.200"><path d="M1.500 1.500L6 6l4.500-4.500" /></svg>
        </TabSearch>
        {tabs.map((t, i) => (
          <Tab key={i} $line={t.line} $w={i === 5 ? 199 : 200}>
            {t.icon}
            <TabTitle $rtl={t.rtl} $fade={t.fade}><Fit w={t.w} rtl={t.rtl}>{t.title}</Fit></TabTitle>
            <CloseMark />
          </Tab>
        ))}
        <Tab $active $w={191}>
          <RingMark size={20} dark />
          <TabTitle $rtl $fade $w={112}><Fit w={112}>تعرفه‌ها | قیمت اش</Fit></TabTitle>
          <CloseMark />
        </Tab>
        <Tab $line $w={205} $pad={17}>
          <Whale />
          <TabTitle $fade $w={113}><Fit w={108} rtl={false}>DeepSeek - Into</Fit></TabTitle>
          <CloseMark />
        </Tab>
        <NewTab><MdAdd size={20} /></NewTab>
        <WindowButtons>
          <svg width="14" height="14" viewBox="0 0 14 14"><path d="M0 6.500h14" stroke="#fff" /></svg>
          <svg width="14" height="14" viewBox="0 0 14 14" fill="none" stroke="#fff"><rect x=".5" y="3" width="10.500" height="10.500" rx="1.500" /><path d="M3 .8h7.500a3 3 0 0 1 3 3V11" /></svg>
          <svg width="14" height="14" viewBox="0 0 14 14"><path d="M.5.500l13 13M13.500.500l-13 13" stroke="#fff" strokeWidth="1.100" /></svg>
        </WindowButtons>
      </TabStrip>
      <ToolbarBack>
        <Toolbar>
          <NavIcon $gap={22}><MdArrowBack size={22} /></NavIcon>
          <NavIcon $gap={23} $dim><MdArrowForward size={22} /></NavIcon>
          <NavIcon $gap={21}><MdRefresh size={23} /></NavIcon>
          <Omnibox>
            <SiteInfo><TuneIcon /></SiteInfo>
            <Url><Fit w={155} rtl={false}>planovin.com<i>/price/</i></Fit></Url>
            <MdGTranslate size={22} />
            <MdStarBorder size={23} />
          </Omnibox>
          <ToolRight>
            <ColorTranslate />
            <ExtensionSlot><MdOutlineExtension size={24} /></ExtensionSlot>
            <ToolSep />
            <MdQueueMusic size={25} />
            <AvatarSlot><Avatar /></AvatarSlot>
            <MdMoreVert size={24} />
          </ToolRight>
        </Toolbar>
      </ToolbarBack>

      <Viewport>
        <Page>
          <Header>
            <Haze $x={205} $y={30} $w={330} $c="#f6f6f7" $b={14} />
            <Haze $x={1180} $y={30} $w={520} $c="#f6f6f7" $b={14} />
            <Haze $x={196} $y={70} $w={24} $c="#dedede" $b={10} />
            <Haze $x={350} $y={62} $w={180} $c="#e2e2e2" $b={11} />
            <Haze $x={430} $y={66} $w={30} $c="#d8d8d8" $b={10} />
            <Haze $x={1230} $y={66} $w={50} $c="#dadbe1" $b={10} />
            <Haze $x={1330} $y={66} $w={44} $c="#b0b0b0" $b={10} />
            <Haze $x={1506} $y={66} $w={46} $c="#dedfe5" $b={10} />
            <Haze $x={1612} $y={66} $w={36} $c="#a6a6a6" $b={10} />
            <PhoneButton>
              <Fit w={101} rtl={false}>۰۲۱-۹۱۶۹۰۸۱۷</Fit>
              <BsTelephone size={21} />
            </PhoneButton>
            <SignUp><Fit w={112}>ثبت نام رایگان</Fit></SignUp>
            <Login><Fit w={37}><u>ورود</u></Fit></Login>
            <Nav>
              <NavItem $gap={26}><Fit w={143}>سوالات متداول</Fit></NavItem>
              <NavItem $gap={26}><Fit w={53}>تعرفه</Fit></NavItem>
              <NavItem $gap={29}><Fit w={76}>سازمانی</Fit></NavItem>
              <NavItem $gap={29}><FaChevronDown size={16} /><Fit w={124}>کسب و کارها</Fit></NavItem>
              <NavItem><FaChevronDown size={16} /><Fit w={73}>امکانات</Fit></NavItem>
              <NavItem $gap={0}><Fit w={40}>خانه</Fit></NavItem>
            </Nav>
            <Brand>
              <BrandText>
                <BrandName><Fit w={89}>پلنوین</Fit></BrandName>
                <BrandTag><Fit w={88}>نوبت‌دهی به سبک نوین</Fit></BrandTag>
              </BrandText>
              <RingMark size={53} />
            </Brand>
          </Header>

          <Panels>
            <Panel $w={340} $h={76} />
            <Panel $w={250} $h={94} $ml={635}>
              <Pill $w={75} $ml={139} />
            </Panel>
            <Panel $w={250} $h={94} $ml={25}>
              <PanelText><Fit w={52}>تومان</Fit></PanelText>
              <Pill $w={66} $ml={43}><Fit w={34}>جاری</Fit></Pill>
            </Panel>
          </Panels>

          <Cards>
            {plans.map((p, i) =>
              i === 2 ? (
                <Popular key={p.name}>
                  <PopularLabel><Fit w={94}>پکیج محبوب</Fit></PopularLabel>
                  <PopularBody><PlanContent plan={p} popular /></PopularBody>
                </Popular>
              ) : (
                <Card key={p.name} $w={p.w} $pad={p.pad}><PlanContent plan={p} /></Card>
              )
            )}
          </Cards>

          <Chat><ChatIcon /></Chat>
        </Page>
        <Scrollbar>
          <svg width="13" height="11" viewBox="0 0 13 11"><path d="M6.500 1L12 10H1z" fill="#9f9f9f" stroke="#9f9f9f" strokeLinejoin="round" /></svg>
          <Thumb />
          <svg width="13" height="11" viewBox="0 0 13 11"><path d="M6.500 10L12 1H1z" fill="#9f9f9f" stroke="#9f9f9f" strokeLinejoin="round" /></svg>
        </Scrollbar>
      </Viewport>

      <Taskbar>
        <Weather>
          <Sun />
          <WeatherText>
            <Fit w={22} rtl={false}>9°C</Fit>
            <Fit w={41} rtl={false}>Sunny</Fit>
          </WeatherText>
        </Weather>
        <Start />
        <SearchBox>
          <Magnifier />
          <SearchLabel><Fit w={52} rtl={false}>Search</Fit></SearchLabel>
          <BulbGlobe />
        </SearchBox>
        <Apps>
          {apps.map((a, i) => (
            <AppSlot key={i}>
              <AppButton $bg={a.bg} $run={a.run} $wide={a.wide}>{a.icon}</AppButton>
            </AppSlot>
          ))}
        </Apps>
        <Tray>
          <svg width="14" height="9" viewBox="0 0 14 9" fill="none" stroke="#fff" strokeWidth="1.600"><path d="M1 8l6-6.500L13 8" /></svg>
          <Lang><Fit w={29} rtl={false}>ENG</Fit></Lang>
          <TrayGroup>
            <svg width="20" height="16" viewBox="0 0 20 16" fill="none" strokeWidth="1.600">
              <path d="M1 6.500a12.500 12.500 0 0 1 18 0" stroke="#6a6e73" />
              <path d="M4 9a8.500 8.500 0 0 1 12 0M6.700 11.500a4.700 4.700 0 0 1 6.600 0" stroke="#fff" />
              <circle cx="10" cy="13.700" r="1.500" fill="#fff" />
            </svg>
            <svg width="21" height="18" viewBox="0 0 21 18" fill="none" stroke="#fff" strokeWidth="1.300">
              <path d="M1 6.500h3L8.500 2v14L4 11.500H1z" strokeLinejoin="round" />
              <path d="M11 6.500a4 4 0 0 1 0 5M13.500 4.500a7 7 0 0 1 0 9M16 2.500a10 10 0 0 1 0 13" />
            </svg>
            <svg width="21" height="14" viewBox="0 0 21 14" fill="none" stroke="#fff" strokeWidth="1.400">
              <rect x="1" y="1" width="16.500" height="12" rx="3" />
              <path d="M19.500 5v4" strokeWidth="2" />
              <rect x="3.500" y="3.500" width="8" height="7" rx="1" fill="#fff" stroke="none" />
            </svg>
          </TrayGroup>
          <Clock>
            <Fit w={53} rtl={false}>5:47 PM</Fit>
            <Fit w={69} rtl={false}>3/22/2025</Fit>
          </Clock>
          <Bell>
            <svg width="18" height="20" viewBox="0 0 18 20" fill="none" stroke="#fff" strokeWidth="1.400">
              <path d="M9 2.500C5 2.500 3.500 5.500 3.500 8v4L1.500 15.500h14L14 12v-1M6.500 16a2.300 2.300 0 0 0 4.500 0" strokeLinejoin="round" />
              <path d="M7 6.500h3.500L7 11h4M12.500 1.500H16l-3.500 4.500h4" />
            </svg>
          </Bell>
        </Tray>
      </Taskbar>
    </Screen>
  );
}
